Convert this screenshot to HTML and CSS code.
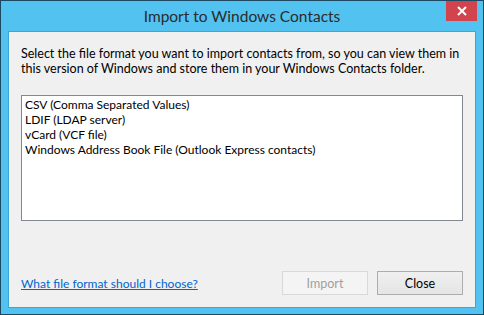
FILE: index.html
```html
<!DOCTYPE html>
<html lang="en">
<head>
    <meta charset="UTF-8">
    <title>Import to Windows Contacts</title>
    <link rel="stylesheet" href="styles.css">
</head>
<body>

    <div class="window">
        <!-- Title bar -->
        <div class="title-bar">
            <div class="title">Import to Windows Contacts</div>
            <button class="close-x" type="button" aria-label="Close">
                <svg width="10" height="10" viewBox="0 0 10 10">
                    <path d="M1 1 L9 9 M9 1 L1 9" stroke="#fff" stroke-width="2" fill="none"/>
                </svg>
            </button>
        </div>

        <!-- Client area -->
        <div class="client">
            <p class="intro">Select the file format you want to import contacts from, so you can view them in this version of Windows and store them in your Windows Contacts folder.</p>

            <ul class="format-list">
                <li>CSV (Comma Separated Values)</li>
                <li>LDIF (LDAP server)</li>
                <li>vCard (VCF file)</li>
                <li>Windows Address Book File (Outlook Express contacts)</li>
            </ul>

            <div class="footer">
                <a class="help-link" href="#">What file format should I choose?</a>
                <div class="buttons">
                    <button class="btn" type="button" disabled>Import</button>
                    <button class="btn" type="button">Close</button>
                </div>
            </div>
        </div>
    </div>

</body>
</html>
```

FILE: styles.css
```css
body {
    margin: 0;
    font-family: Lato, "Open Sans", sans-serif;
}
.window {
    width: 484px;
    height: 315px;
    box-sizing: border-box;
    border: 1px solid #1d4862;
    background: #52c3f1;
    display: flex;
    flex-direction: column;
}
.title-bar {
    height: 30px;
    display: grid;
    grid-template-columns: 1fr auto 1fr;
}
.title {
    grid-column: 2;
    font-size: 15.5px;
    line-height: 31px;
    color: #2b2b2b;
}
.close-x {
    grid-column: 3;
    justify-self: end;
    width: 31px;
    height: 20px;
    margin-right: 6px;
    padding: 0;
    border: none;
    background: #d1434d;
    display: flex;
    align-items: center;
    justify-content: center;
}
.client {
    flex: 1;
    margin: 0 7px 6px;
    border: 1px solid #3ea6d6;
    background: #f0f0f0;
    padding: 14px 12px 12px;
    display: flex;
    flex-direction: column;
    font-size: 12.5px;
    line-height: 15px;
    color: #000;
}
.intro {
    margin: 0 0 19px;
}
.format-list {
    list-style: none;
    margin: 0;
    padding: 1px 3px;
    height: 122px;
    border: 1px solid #828790;
    background: #fff;
    font-size: 12px;
}
.footer {
    margin-top: auto;
    display: flex;
    justify-content: space-between;
    align-items: center;
}
.help-link {
    font-size: 12px;
    color: #0066cc;
    text-decoration: underline;
}
.buttons {
    display: flex;
    gap: 9px;
}
.btn {
    width: 86px;
    height: 24px;
    font-family: inherit;
    font-size: 12.5px;
    color: #000;
    border: 1px solid #adadad;
    background: linear-gradient(#f0f0f0, #e5e5e5);
    padding: 0;
}
.btn:disabled {
    color: #a0a0a0;
    border-color: #d9d9d9;
    background: #f4f4f4;
}
```
